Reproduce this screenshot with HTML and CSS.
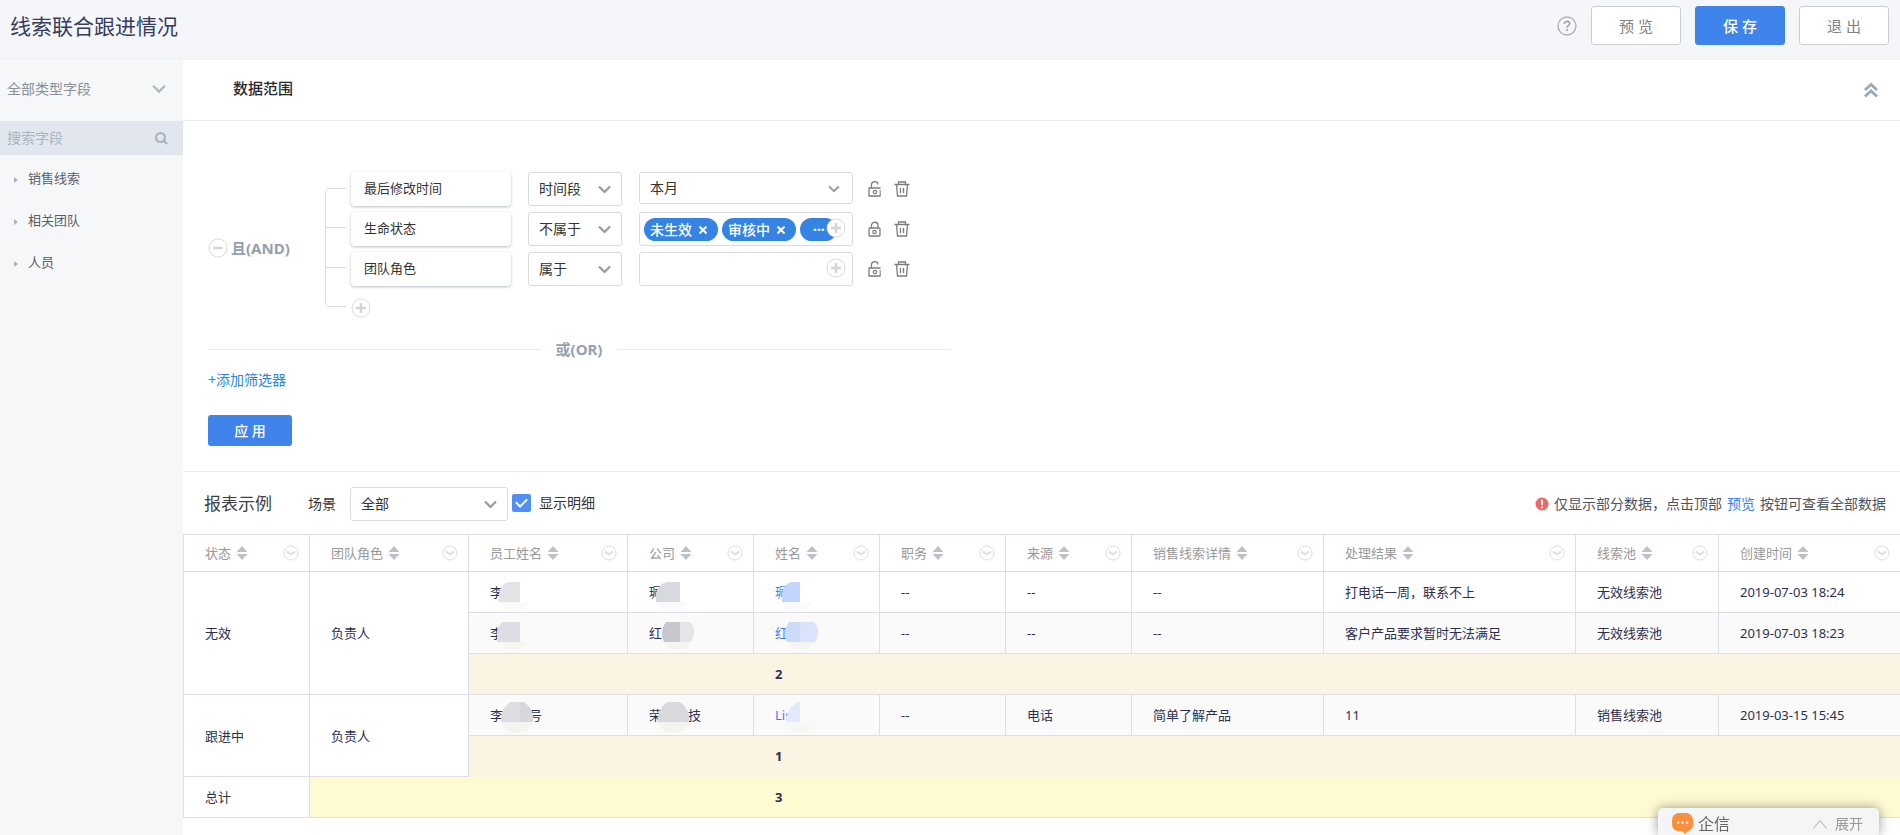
FILE: index.html
```html
<!DOCTYPE html>
<html lang="zh-CN">
<head>
<meta charset="utf-8">
<title>线索联合跟进情况</title>
<link rel="stylesheet" href="styles.css">
</head>
<body>
<svg class="defs" aria-hidden="true">
  <symbol id="chev" viewBox="0 0 13 9"><path d="M1 1.500l5.500 5.500 5.500-5.500" fill="none" stroke="currentColor" stroke-width="2.200"/></symbol>
  <symbol id="plus" viewBox="0 0 20 20"><circle cx="10" cy="10" r="9" fill="#fff" stroke="#dcdcdc" stroke-width="1"/><path d="M5 10h10M10 5v10" stroke="#d4d4d4" stroke-width="2.500"/></symbol>
  <symbol id="lock-open" viewBox="0 0 13 16"><path d="M3.500 7V4.500a3 3 0 0 1 6.500-1" fill="none" stroke="currentColor" stroke-width="1.300"/><path d="M12.500 7H1v8h11.500" fill="none" stroke="currentColor" stroke-width="1.300"/><path d="M12.200 9v6" stroke="currentColor" stroke-width="1"/><circle cx="7" cy="11" r="1.700" fill="none" stroke="currentColor" stroke-width="1.200"/></symbol>
  <symbol id="lock" viewBox="0 0 13 16"><path d="M3.500 7V4.500a3.200 3.200 0 0 1 6.500 0V7" fill="none" stroke="currentColor" stroke-width="1.300"/><rect x="1" y="7" width="11" height="8" rx="1" fill="none" stroke="currentColor" stroke-width="1.300"/><circle cx="6.500" cy="11" r="1.700" fill="none" stroke="currentColor" stroke-width="1.200"/></symbol>
  <symbol id="trash" viewBox="0 0 16 16"><path d="M0.500 3.500h15M4.500 3.500V1h7v2.500M2.500 3.500l1 11.500h9l1-11.500M6.500 7v5M9.500 7v5" fill="none" stroke="currentColor" stroke-width="1.300"/></symbol>
  <symbol id="sort" viewBox="0 0 12 14"><path d="M0.500 6L6 0l5.500 6zM0.500 8L6 14l5.500-6z" fill="#bcc1ca"/></symbol>
  <symbol id="menu" viewBox="0 0 16 16"><circle cx="8" cy="8" r="7" fill="#fff" stroke="#dedede"/><path d="M4 6.500l4 3 4-3" fill="none" stroke="#dedede" stroke-width="2"/></symbol>
</svg>

<header class="topbar">
  <h1>线索联合跟进情况</h1>
  <div class="actions">
    <button class="help" aria-label="帮助"><svg viewBox="0 0 20 20" width="20" height="20"><circle cx="10" cy="10" r="9" fill="none" stroke="#adadad" stroke-width="1.300"/><path d="M7.300 8c0-3.400 5.400-3.400 5.400-.2 0 1.900-2.600 2-2.600 4" fill="none" stroke="#a6a6a6" stroke-width="1.600"/><path d="M9.200 13.200h1.800v1.800H9.200z" fill="#a6a6a6"/></svg></button>
    <button class="btn">预 览</button>
    <button class="btn primary">保 存</button>
    <button class="btn">退 出</button>
  </div>
</header>

<div class="layout">
  <aside class="sidebar">
    <div class="type-select">
      <select aria-label="字段类型"><option>全部类型字段</option></select>
      <svg class="chev" width="14" height="10"><use href="#chev"/></svg>
    </div>
    <div class="search">
      <input type="text" placeholder="搜索字段" aria-label="搜索字段">
      <button aria-label="搜索"><svg viewBox="0 0 14 14" width="14" height="14"><circle cx="6.500" cy="6.500" r="4.500" fill="none" stroke="currentColor" stroke-width="2.200"/><path d="M9.500 9.500L13 13" stroke="currentColor" stroke-width="2.400"/></svg></button>
    </div>
    <nav>
      <ul class="tree">
        <li><button>销售线索</button></li>
        <li><button>相关团队</button></li>
        <li><button>人员</button></li>
      </ul>
    </nav>
  </aside>

  <main class="content">
    <div class="range-head">
      <h2>数据范围</h2>
      <button aria-label="收起"><svg viewBox="0 0 14 16" width="14" height="16"><path d="M1 8l6-5.500L13 8M1 14.500L7 9l6 5.500" fill="none" stroke="#9fa9b3" stroke-width="2.800"/></svg></button>
    </div>

    <section class="filters">
      <div class="group">
        <div class="logic">
          <button aria-label="删除分组"><svg viewBox="0 0 20 20" width="20" height="20"><circle cx="10" cy="10" r="9" fill="#fff" stroke="#dcdcdc"/><path d="M5.500 10h9" stroke="#d4d4d4" stroke-width="2.500"/></svg></button>
          <span>且(AND)</span>
        </div>
        <svg class="bracket" width="21" height="120" viewBox="0 0 21 120"><path d="M21 .5H3.500q-3 0-3 3v112q0 3 3 3H21M.5 39.500H21M.5 79.500H21" fill="none" stroke="#dcdcdc"/></svg>
        <div class="rules">
          <div class="rule">
            <div class="field">最后修改时间</div>
            <div class="pick op"><select aria-label="最后修改时间条件"><option>时间段</option></select><svg class="chev" width="13" height="9"><use href="#chev"/></svg></div>
            <div class="pick value"><select aria-label="最后修改时间范围"><option>本月</option></select><svg class="chev" width="12" height="8"><use href="#chev"/></svg></div>
            <div class="tools"><button aria-label="锁定"><svg width="13" height="16"><use href="#lock-open"/></svg></button><button aria-label="删除"><svg width="16" height="16"><use href="#trash"/></svg></button></div>
          </div>
          <div class="rule">
            <div class="field">生命状态</div>
            <div class="pick op"><select aria-label="生命状态条件"><option>不属于</option></select><svg class="chev" width="13" height="9"><use href="#chev"/></svg></div>
            <div class="value tags">
              <span class="tag">未生效<button aria-label="移除未生效"><svg viewBox="0 0 8 8" width="8" height="8"><path d="M.5.5l7 7m0-7l-7 7" stroke="#fff" stroke-width="2"/></svg></button></span>
              <span class="tag">审核中<button aria-label="移除审核中"><svg viewBox="0 0 8 8" width="8" height="8"><path d="M.5.5l7 7m0-7l-7 7" stroke="#fff" stroke-width="2"/></svg></button></span>
              <span class="tag more">···</span>
              <button class="add" aria-label="选择生命状态"><svg width="20" height="20"><use href="#plus"/></svg></button>
            </div>
            <div class="tools"><button aria-label="解锁"><svg width="13" height="16"><use href="#lock"/></svg></button><button aria-label="删除"><svg width="16" height="16"><use href="#trash"/></svg></button></div>
          </div>
          <div class="rule">
            <div class="field">团队角色</div>
            <div class="pick op"><select aria-label="团队角色条件"><option>属于</option></select><svg class="chev" width="13" height="9"><use href="#chev"/></svg></div>
            <div class="value tags">
              <button class="add" aria-label="选择团队角色"><svg width="20" height="20"><use href="#plus"/></svg></button>
            </div>
            <div class="tools"><button aria-label="锁定"><svg width="13" height="16"><use href="#lock-open"/></svg></button><button aria-label="删除"><svg width="16" height="16"><use href="#trash"/></svg></button></div>
          </div>
          <button class="add-rule" aria-label="添加条件"><svg width="20" height="20"><use href="#plus"/></svg></button>
        </div>
      </div>
      <div class="or"><span>或(OR)</span></div>
      <a class="add-filter" href="#">+添加筛选器</a>
      <button class="apply">应 用</button>
    </section>

    <section class="report">
      <div class="report-head">
        <h3>报表示例</h3>
        <label for="scene">场景</label>
        <div class="pick scene"><select id="scene"><option>全部</option></select><svg class="chev" width="13" height="9"><use href="#chev"/></svg></div>
        <label class="detail"><input type="checkbox" checked>显示明细</label>
        <p class="note"><svg viewBox="0 0 14 14" width="14" height="14"><circle cx="7" cy="7" r="6.500" fill="#f06765"/><path d="M7 2.800v5.200M7 9.300v2" stroke="#fff" stroke-width="2"/></svg>仅显示部分数据，点击顶部 <a href="#">预览</a> 按钮可查看全部数据</p>
      </div>
      <table>
        <colgroup><col class="w-s"><col class="w-m"><col class="w-m"><col class="w-s"><col class="w-s"><col class="w-s"><col class="w-s"><col class="w-l"><col class="w-xl"><col class="w-p"><col></colgroup>
        <thead>
          <tr>
            <th><div>状态<svg class="sort"><use href="#sort"/></svg><svg class="menu"><use href="#menu"/></svg></div></th>
            <th><div>团队角色<svg class="sort"><use href="#sort"/></svg><svg class="menu"><use href="#menu"/></svg></div></th>
            <th><div>员工姓名<svg class="sort"><use href="#sort"/></svg><svg class="menu"><use href="#menu"/></svg></div></th>
            <th><div>公司<svg class="sort"><use href="#sort"/></svg><svg class="menu"><use href="#menu"/></svg></div></th>
            <th><div>姓名<svg class="sort"><use href="#sort"/></svg><svg class="menu"><use href="#menu"/></svg></div></th>
            <th><div>职务<svg class="sort"><use href="#sort"/></svg><svg class="menu"><use href="#menu"/></svg></div></th>
            <th><div>来源<svg class="sort"><use href="#sort"/></svg><svg class="menu"><use href="#menu"/></svg></div></th>
            <th><div>销售线索详情<svg class="sort"><use href="#sort"/></svg><svg class="menu"><use href="#menu"/></svg></div></th>
            <th><div>处理结果<svg class="sort"><use href="#sort"/></svg><svg class="menu"><use href="#menu"/></svg></div></th>
            <th><div>线索池<svg class="sort"><use href="#sort"/></svg><svg class="menu"><use href="#menu"/></svg></div></th>
            <th><div>创建时间<svg class="sort"><use href="#sort"/></svg><svg class="menu"><use href="#menu"/></svg></div></th>
          </tr>
        </thead>
        <tbody>
          <tr>
            <td rowspan="3">无效</td><td rowspan="3">负责人</td>
            <td><div class="masked">李<svg viewBox="0 0 60 32"><path d="M30 8v20H9V20Q10 10 19 8z" fill="#e2e3e7"/><path d="M9 28h30q-5 9-15 9T9 28" fill="#fafafa"/></svg></div></td>
            <td><div class="masked">珮<svg viewBox="0 0 60 32"><path d="M31 8v20H7V20Q9 10 18 8z" fill="#d8d9de"/><path d="M7 28h31q-5 9-15 9T7 28" fill="#fafafa"/></svg></div></td>
            <td><div class="masked link">珮<svg viewBox="0 0 60 32"><path d="M25 8v20H7V20Q9 10 16 8z" fill="#c4d5fd"/><path d="M7 28h30q-5 9-15 9T7 28" fill="#fafafa"/></svg></div></td>
            <td>--</td><td>--</td><td>--</td><td>打电话一周，联系不上</td><td>无效线索池</td><td>2019-07-03 18:24</td>
          </tr>
          <tr class="alt">
            <td><div class="masked">李<svg viewBox="0 0 60 32"><path d="M30 7v20H7V16Q9 9 13 7z" fill="#dddde3"/><path d="M8 27h29q-5 8-14 8T8 27" fill="#f7f6f0"/></svg></div></td>
            <td><div class="masked">红<svg viewBox="0 0 60 32"><path d="M31 7v20H15q-5-11 2-20z" fill="#c7c7d0"/><path d="M31 7h10q8 9 1 20H31z" fill="#e4e5e9"/><path d="M15 27h27q-5 8-14 8t-13-8" fill="#f5f5f0"/></svg></div></td>
            <td><div class="masked link">红<svg viewBox="0 0 60 32"><path d="M25 7v20H12q-5-11 2-20z" fill="#ccdafc"/><path d="M25 7h14q8 9 1 20H25z" fill="#d9e3fc"/><path d="M13 27h26q-5 8-13 8t-13-8" fill="#f6f6f1"/></svg></div></td>
            <td>--</td><td>--</td><td>--</td><td>客户产品要求暂时无法满足</td><td>无效线索池</td><td>2019-07-03 18:23</td>
          </tr>
          <tr class="sub"><td></td><td></td><td>2</td><td></td><td></td><td></td><td></td><td></td><td></td></tr>
          <tr class="alt">
            <td rowspan="2" class="plain">跟进中</td><td rowspan="2" class="plain">负责人</td>
            <td><div class="masked">李<span class="gap"></span>号<svg viewBox="0 0 60 32"><path d="M11 25Q10 13 20 5h14q11 8 9 20z" fill="#dcdde0"/><path d="M30 5h4q11 8 9 20H30z" fill="#d8d8dc"/><path d="M11 25h32q-4 11-16 11T11 25" fill="#f4f5f0"/></svg></div></td>
            <td><div class="masked">荣<span class="gap"></span>技<svg viewBox="0 0 60 32"><path d="M9 25Q8 13 18 5h13q11 8 9 20z" fill="#d8d9dd"/><path d="M9 25h31q-4 11-16 11T9 25" fill="#f3f4ef"/></svg></div></td>
            <td><div class="masked link">Lis<svg viewBox="0 0 60 32"><path d="M25 4v21H11q0-15 14-21" fill="#e3eafc"/><path d="M11 25h30q-4 11-16 11T11 25" fill="#f7f8f5"/></svg></div></td>
            <td>--</td><td>电话</td><td>简单了解产品</td><td>11</td><td>销售线索池</td><td>2019-03-15 15:45</td>
          </tr>
          <tr class="sub last"><td></td><td></td><td>1</td><td></td><td></td><td></td><td></td><td></td><td></td></tr>
          <tr class="total"><td>总计</td><td></td><td></td><td></td><td>3</td><td></td><td></td><td></td><td></td><td></td><td></td></tr>
        </tbody>
      </table>
    </section>
  </main>
</div>

<div class="chat">
  <svg viewBox="0 0 21 21" width="21" height="21"><path d="M6 0h9q6 1 6 8v3q0 6-5 7l-3 3-3-3H6q-6-1-6-7V8q0-7 6-8z" fill="#fc8f3c"/><path d="M5 9.500h2.200M9.500 9.500h2.200M14 9.500h2.200" stroke="#fff" stroke-width="2"/></svg>
  <strong>企信</strong>
  <button><svg viewBox="0 0 14 10" width="14" height="10"><path d="M.5 9.500L7 1.500l6.500 8" fill="none" stroke="#aaa"/></svg>展开</button>
</div>
</body>
</html>
```
FILE: styles.css
```css
* { box-sizing: border-box; }
body {
  margin: 0;
  min-height: 100vh;
  display: flex;
  flex-direction: column;
  font: 14px/20px "Noto Sans", "Noto Sans CJK SC", sans-serif;
  color: #333;
  background: #fff;
}
h1, h2, h3, p, ul { margin: 0; padding: 0; font-weight: 400; }
ul { list-style: none; }
a { text-decoration: none; }
svg { display: block; flex: none; }
button, input, select { font: inherit; color: inherit; margin: 0; padding: 0; border: 0; background: none; outline: 0; }
button { cursor: pointer; }
select { appearance: none; width: 100%; height: 100%; }
.defs { position: absolute; width: 0; height: 0; }

.topbar {
  display: flex;
  justify-content: space-between;
  align-items: flex-start;
  height: 60px;
  padding: 6px 11px 0 10px;
  background: #f4f6fa;
  border-bottom: 2px solid #f1f3f6;
}
.topbar h1 { font-size: 21px; line-height: 40px; color: #363c5c; }
.actions { display: flex; align-items: center; gap: 14px; }
.btn { width: 90px; height: 39px; border: 1px solid #ccc; border-radius: 3px; background: #fff; color: #808080; font-size: 15px; }
.btn.primary { background: #3f84ea; border-color: #3f84ea; color: #fff; font-weight: 500; }

.layout { display: flex; flex: 1; }
.sidebar { width: 183px; flex: none; background: #f5f7f9; }
.type-select { position: relative; height: 61px; padding: 0 0 4px 7px; color: #8c8f94; }
.type-select .chev { position: absolute; right: 17px; top: 24px; color: #aebac3; }
.search { display: flex; align-items: center; height: 34px; padding: 0 15px 0 7px; background: #e2e6ee; color: #a9b4bf; }
.search input { flex: 1; min-width: 0; }
.search input::placeholder { color: #a9b4bf; opacity: 1; }
.tree { padding-top: 2px; }
.tree button { display: flex; align-items: center; height: 42px; padding-left: 14px; gap: 10px; font-size: 13px; color: #5a5e68; }
.tree button::before { content: ""; border: 3px solid transparent; border-left: 4px solid #aab4be; border-right: 0; margin-top: 4px; }

.content { flex: 1; min-width: 0; }
.range-head { display: flex; align-items: center; justify-content: space-between; height: 61px; padding: 0 22px 5px 50px; border-bottom: 1px solid #ebecee; }
.range-head h2 { font-size: 15px; font-weight: 500; color: #25282e; }
.range-head svg { margin-top: 4px; }

.filters { padding: 51px 25px 25px; display: flex; flex-direction: column; align-items: flex-start; border-bottom: 1px solid #ebecee; }
.group { display: flex; }
.logic { display: flex; align-items: center; gap: 3px; width: 117px; padding-top: 6px; font-size: 15px; font-weight: 700; color: #92a0af; }
.bracket { margin: 16px 5px 0 0; }
.rules { display: flex; flex-direction: column; gap: 6px; align-items: flex-start; }
.rule { display: flex; align-items: flex-start; }
.field { width: 160px; height: 34px; padding: 0 13px; margin-right: 17px; line-height: 32px; font-size: 13px; border-radius: 4px; box-shadow: 0 1px 3px #b8c0c8; }
.pick { position: relative; height: 34px; border: 1px solid #dbdbdb; border-radius: 3px; color: #333; background: #fff; }
.pick select { padding-left: 10px; }
.pick .chev { position: absolute; right: 10px; top: 12px; color: #999; pointer-events: none; }
.op { width: 94px; margin-right: 17px; }
.value { width: 214px; margin-right: 15px; }
.pick.value { height: 32px; }
.pick.value .chev { right: 12px; }
.tags { position: relative; display: flex; align-items: center; gap: 4px; height: 34px; padding: 1px 4px 0; border: 1px solid #dbdbdb; border-radius: 3px; }
.tag { display: flex; align-items: center; gap: 7px; height: 23px; padding: 0 11px 0 6px; border-radius: 12px; background: #3584e4; color: #fff; font-weight: 500; white-space: nowrap; }
.tag.more { padding: 0 12px 0 13px; font-weight: 700; }
.tags .add { position: absolute; right: 6px; top: 5px; }
.tools { display: flex; gap: 13px; padding-top: 9px; color: #7c7c7c; }
.add-rule { margin-top: 6px; }
.or { display: flex; align-items: center; gap: 16px; width: 742px; margin-top: 21px; font-size: 15px; font-weight: 700; color: #92a0af; }
.or::before, .or::after { content: ""; flex: 1; height: 1px; background: #ebebeb; }
.add-filter { margin-top: 11px; color: #3184e4; }
.apply { width: 84px; height: 31px; margin-top: 25px; border-radius: 3px; background: #3f84ea; color: #fff; font-weight: 500; }

.report-head { display: flex; align-items: center; height: 62px; padding: 1px 14px 0 21px; }
.report-head h3 { font-size: 17px; color: #3c3f44; margin-right: 36px; }
.scene { width: 158px; margin: 0 4px 0 14px; }
.detail { display: flex; align-items: center; gap: 8px; padding-bottom: 1px; }
.detail input { appearance: none; width: 19px; height: 18px; border-radius: 2px; background: #4f90f2; display: grid; place-items: center; }
.detail input:checked::after { content: ""; width: 9px; height: 5px; border: solid #fff; border-width: 0 0 2px 2px; transform: rotate(-45deg); margin-bottom: 3px; }
.note { display: flex; align-items: center; gap: 5px; margin-left: auto; color: #50545e; }
.note a { color: #3b7ff5; }

table { width: 100%; table-layout: fixed; border-collapse: collapse; font-size: 13px; color: #2b3050; }
.w-s { width: 126px; }
.w-m { width: 159px; }
.w-l { width: 192px; }
.w-xl { width: 252px; }
.w-p { width: 143px; }
th, td { height: 41px; padding: 0 0 0 21px; border: 1px solid #dcdfe5; text-align: left; font-weight: 400; white-space: nowrap; }
th:last-child, td:last-child { border-right: 0; }
th { height: 37px; color: #999; }
th div { display: flex; align-items: center; gap: 5px; padding-right: 10px; }
.sort { width: 12px; height: 14px; }
.menu { width: 16px; height: 16px; margin-left: auto; }
.alt td { background: #fafafa; }
.alt td.plain { background: #fff; }
.sub td { background: #f9f5e2; font-weight: 700; border-left-color: #f9f5e2; border-right-color: #f9f5e2; }
.sub td:first-child { border-left-color: #dcdfe5; }
.sub.last td { border-bottom-color: #f9f5e2; }
.total td { background: #fefad1; font-weight: 700; border-left-color: #fefad1; border-right-color: #fefad1; }
.total td:first-child { background: #fff; font-weight: 400; border-color: #dcdfe5; }
.masked { position: relative; display: flex; }
.masked svg { position: absolute; left: 0; top: -8px; width: 60px; height: 32px; overflow: visible; }
.masked.link { color: #3b7ff5; }
.gap { width: 26px; }

.chat { position: fixed; right: 21px; bottom: 0; display: flex; align-items: center; gap: 5px; width: 221px; height: 27px; padding: 4px 16px 0 14px; background: #f4f5f7; border-radius: 5px 5px 0 0; box-shadow: 0 0 12px rgba(0, 0, 0, .4); }
.chat strong { font-size: 16px; font-weight: 400; color: #666; }
.chat button { display: flex; align-items: center; gap: 8px; margin-left: auto; color: #999; }
```
